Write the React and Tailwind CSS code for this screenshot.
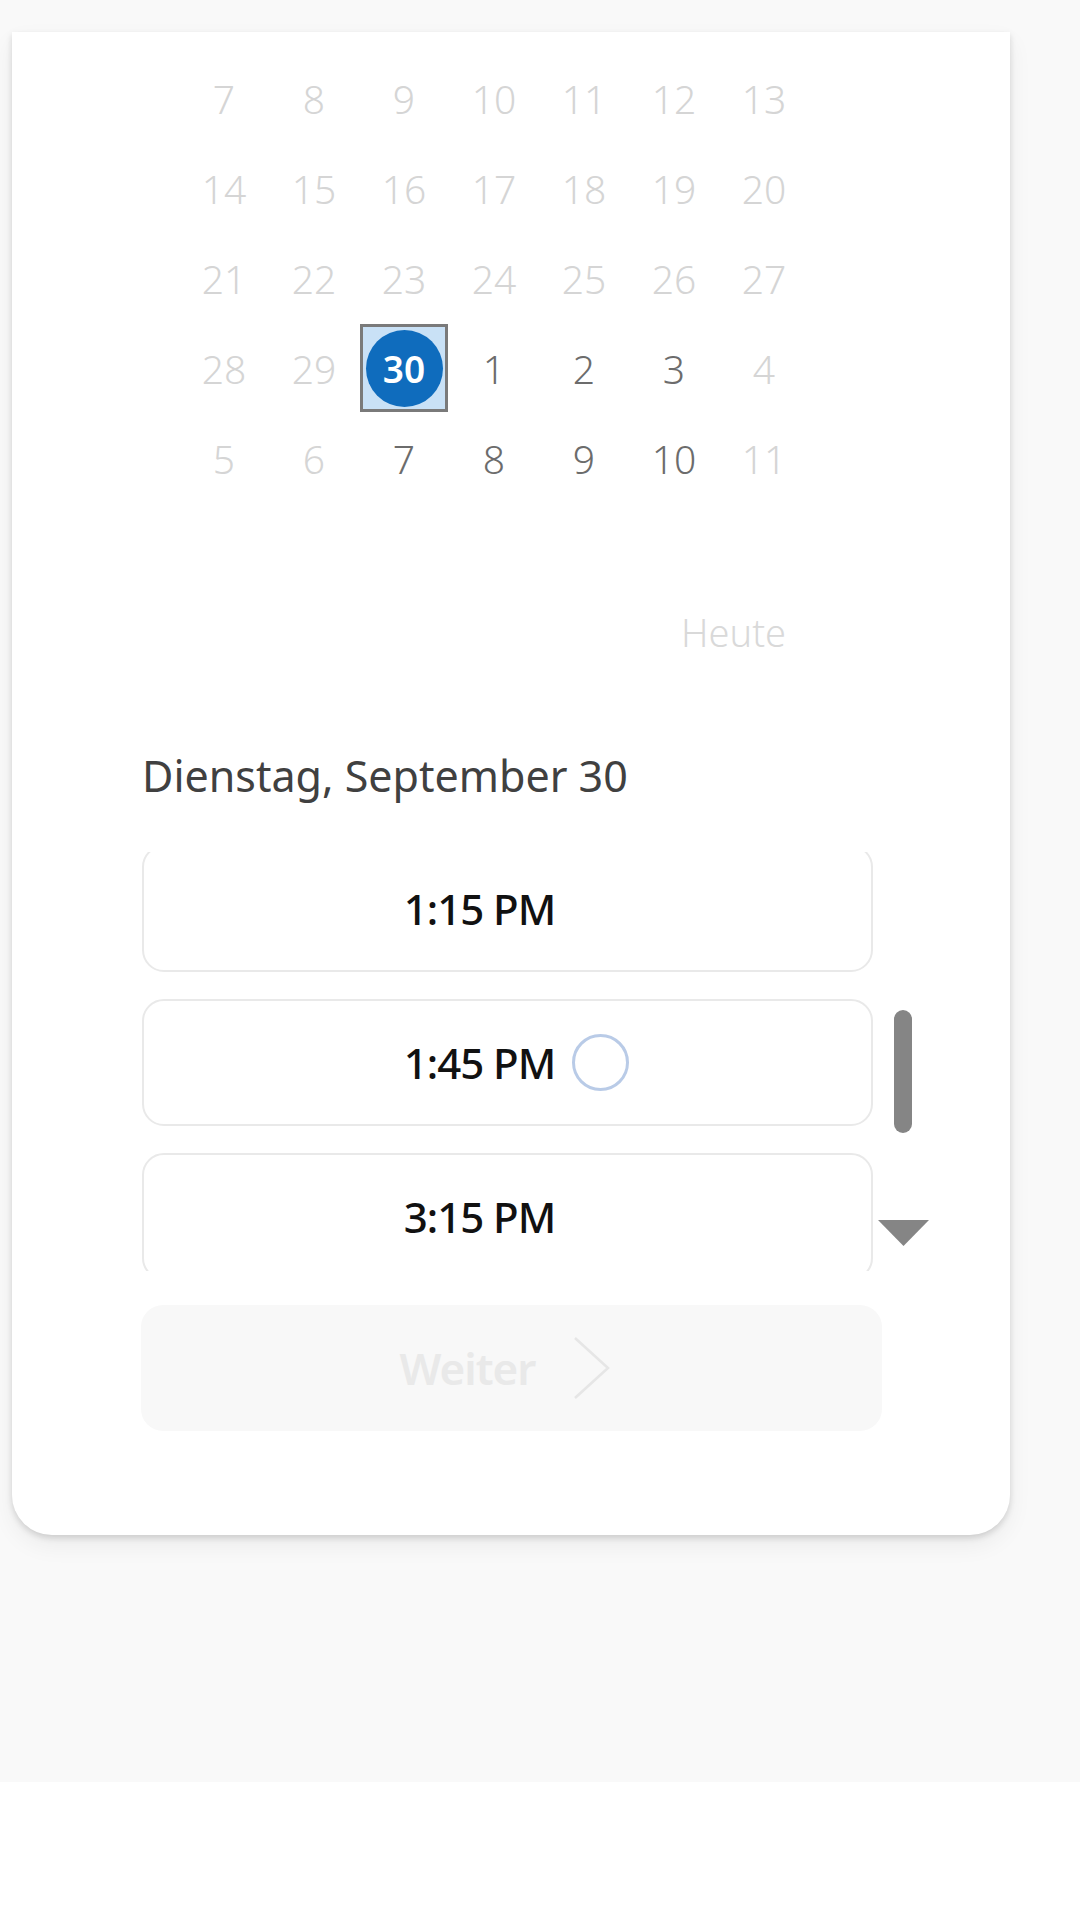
import React from "react";

const F = { fontFamily: '"Noto Sans", "Open Sans", Roboto, sans-serif' };

const rows = [
  [[7, 0], [8, 0], [9, 0], [10, 0], [11, 0], [12, 0], [13, 0]],
  [[14, 0], [15, 0], [16, 0], [17, 0], [18, 0], [19, 0], [20, 0]],
  [[21, 0], [22, 0], [23, 0], [24, 0], [25, 0], [26, 0], [27, 0]],
  [[28, 0], [29, 0], [30, 2], [1, 1], [2, 1], [3, 1], [4, 0]],
  [[5, 0], [6, 0], [7, 1], [8, 1], [9, 1], [10, 1], [11, 0]],
];

function Day({ n, s }) {
  if (s === 2) {
    return (
      <div className="flex h-[90px] w-[90px] items-center justify-center">
        <div className="flex h-[88px] w-[88px] items-center justify-center border-[3px] border-[#7a7a7a] bg-[#c9e1f6]">
          <div className="flex h-[77px] w-[77px] items-center justify-center rounded-full bg-[#0f6cbd] text-[37px] font-semibold leading-none text-white">
            {n}
          </div>
        </div>
      </div>
    );
  }
  return (
    <div
      className={
        "flex h-[90px] w-[90px] items-center justify-center text-[39px] font-light leading-none " +
        (s === 1 ? "text-[#6c6c6c]" : "text-[#d5d5d5]")
      }
    >
      {n}
    </div>
  );
}

function Slot({ time, loading }) {
  return (
    <div className="flex h-[127px] w-full shrink-0 items-center justify-center rounded-[22px] border-2 border-[#e9e9e9] bg-white pl-[18px]">
      <span className="text-[42px] font-medium leading-none tracking-[-1px] text-[#111111]">{time}</span>
      <span
        className={
          "ml-[17px] h-[57px] w-[57px] rounded-full border-[3px] " +
          (loading ? "border-[#b9cbe7]" : "border-transparent")
        }
      />
    </div>
  );
}

export default function App() {
  return (
    <div className="h-[1920px] w-[1080px] bg-white" style={F}>
      <div className="h-[1782px] bg-[#f9f9f9] pt-[32px]">
        <div className="ml-[12px] w-[998px] rounded-b-[40px] bg-white pl-[130px] shadow-[0_3px_6px_rgba(0,0,0,0.14),0_10px_24px_rgba(0,0,0,0.06)]">
          {/* calendar grid */}
          <div className="ml-[37px] flex flex-col pt-[21px]">
            {rows.map((r, i) => (
              <div key={i} className="flex">
                {r.map(([n, s], j) => (
                  <Day key={j} n={n} s={s} />
                ))}
              </div>
            ))}
          </div>

          {/* today link */}
          <div className="mt-[104px] flex h-[50px] items-center pl-[539px] text-[38px] font-light leading-none text-[#d9d9d9]">
            Heute
          </div>

          {/* date heading */}
          <div className="mt-[92px] flex h-[52px] items-center text-[43px] leading-none text-[#404040]">
            Dienstag, September 30
          </div>

          {/* slots list with scrollbar */}
          <div className="mt-[51px] flex">
            <div className="h-[419px] w-[731px] overflow-hidden">
              <div className="-mt-[7px] flex flex-col gap-[27px]">
                <Slot time="1:15 PM" />
                <Slot time="1:45 PM" loading />
                <Slot time="3:15 PM" />
              </div>
            </div>
            <div className="flex w-[60px] flex-col items-center">
              <div className="mt-[158px] h-[123px] w-[18px] rounded-full bg-[#858585]" />
              <svg className="mt-[87px]" width="51" height="26" viewBox="0 0 51 26">
                <polygon points="0,0 51,0 25.5,26" fill="#858585" />
              </svg>
            </div>
          </div>

          {/* continue button */}
          <div className="mt-[34px] flex h-[126px] w-[741px] -ml-[1px] items-center justify-center rounded-[22px] bg-[#f8f8f8] pr-[12px]">
            <span className="text-[44px] font-semibold leading-none tracking-[-1px] text-[#e9e9e9]">Weiter</span>
            <svg className="ml-[38px]" width="38" height="64" viewBox="0 0 38 64">
              <polyline points="2,2 35,32 2,62" fill="none" stroke="#e6e6e6" strokeWidth="2.5" />
            </svg>
          </div>

          <div className="h-[104px]" />
        </div>
      </div>
    </div>
  );
}
